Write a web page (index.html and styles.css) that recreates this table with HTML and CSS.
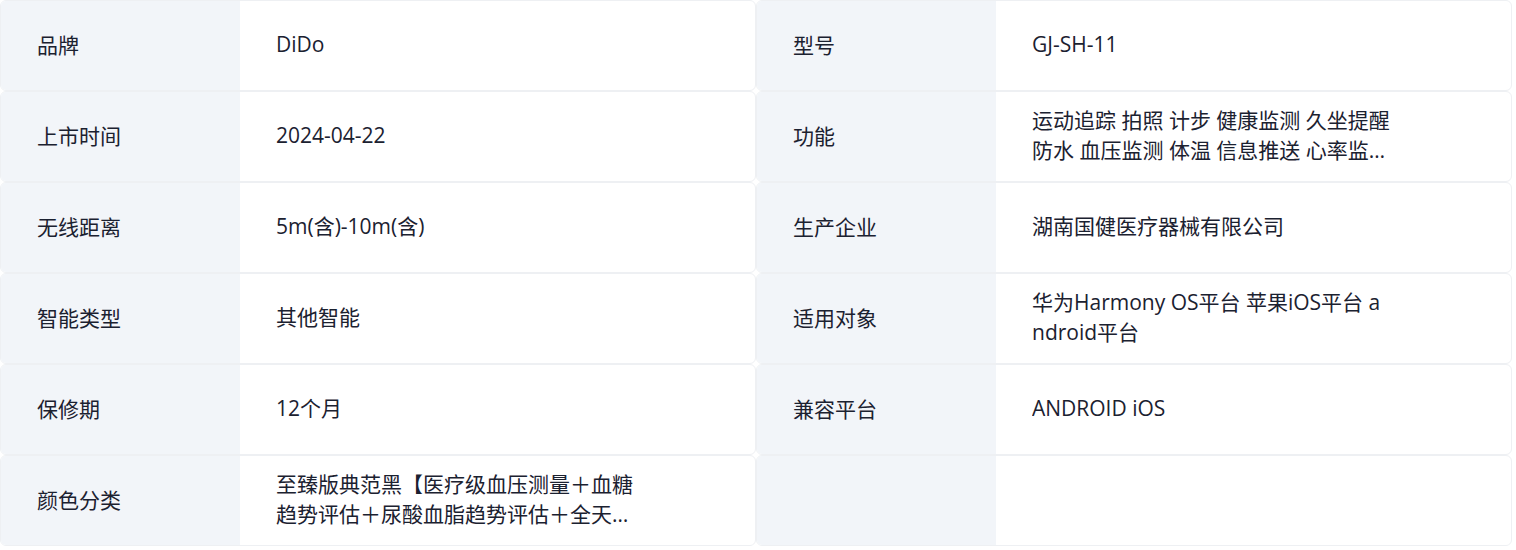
FILE: index.html
```html
<!DOCTYPE html>
<html lang="zh-CN">
<head>
<meta charset="utf-8">
<title>参数</title>
<link rel="stylesheet" href="styles.css">
</head>
<body>
<div class="specs">
  <div class="item"><div class="label">品牌</div><div class="value"><span class="text">DiDo</span></div></div>
  <div class="item"><div class="label">型号</div><div class="value"><span class="text">GJ-SH-11</span></div></div>
  <div class="item"><div class="label">上市时间</div><div class="value"><span class="text">2024-04-22</span></div></div>
  <div class="item"><div class="label">功能</div><div class="value"><span class="text">运动追踪 拍照 计步 健康监测 久坐提醒 防水 血压监测 体温 信息推送 心率监测 睡眠监测 来电提醒</span></div></div>
  <div class="item"><div class="label">无线距离</div><div class="value"><span class="text">5m(含)-10m(含)</span></div></div>
  <div class="item"><div class="label">生产企业</div><div class="value"><span class="text">湖南国健医疗器械有限公司</span></div></div>
  <div class="item"><div class="label">智能类型</div><div class="value"><span class="text">其他智能</span></div></div>
  <div class="item"><div class="label">适用对象</div><div class="value"><span class="text">华为Harmony OS平台 苹果iOS平台 android平台</span></div></div>
  <div class="item"><div class="label">保修期</div><div class="value"><span class="text">12个月</span></div></div>
  <div class="item"><div class="label">兼容平台</div><div class="value"><span class="text">ANDROID iOS</span></div></div>
  <div class="item"><div class="label">颜色分类</div><div class="value"><span class="text">至臻版典范黑【医疗级血压测量＋血糖趋势评估＋尿酸血脂趋势评估＋全天候健康监测】</span></div></div>
  <div class="item"><div class="label"></div><div class="value"><span class="text"></span></div></div>
</div>
</body>
</html>
```
FILE: styles.css
```css
* { box-sizing: border-box; }
html, body { margin: 0; padding: 0; background: #ffffff; }
body {
  font-family: "Open Sans", "Noto Sans CJK SC", sans-serif;
  font-size: 21px;
  color: #1b2130;
}
.specs {
  width: 1512px;
  display: grid;
  grid-template-columns: 756px 756px;
  grid-auto-rows: 91px;
}
.item {
  display: flex;
  border: 1px solid #eef0f3;
  border-radius: 6px;
  overflow: hidden;
}
.label {
  width: 240px;
  flex: 0 0 240px;
  background: #f2f5f9;
  display: flex;
  align-items: center;
  padding: 0 0 3px 37px;
  margin: -1px 0 -1px -1px;
}
.value {
  flex: 1;
  display: flex;
  align-items: center;
  padding: 0 0 3px 36px;
}
.text {
  width: 358px;
  line-height: 30px;
  word-break: break-all;
  display: -webkit-box;
  -webkit-box-orient: vertical;
  -webkit-line-clamp: 2;
  overflow: hidden;
}
```
